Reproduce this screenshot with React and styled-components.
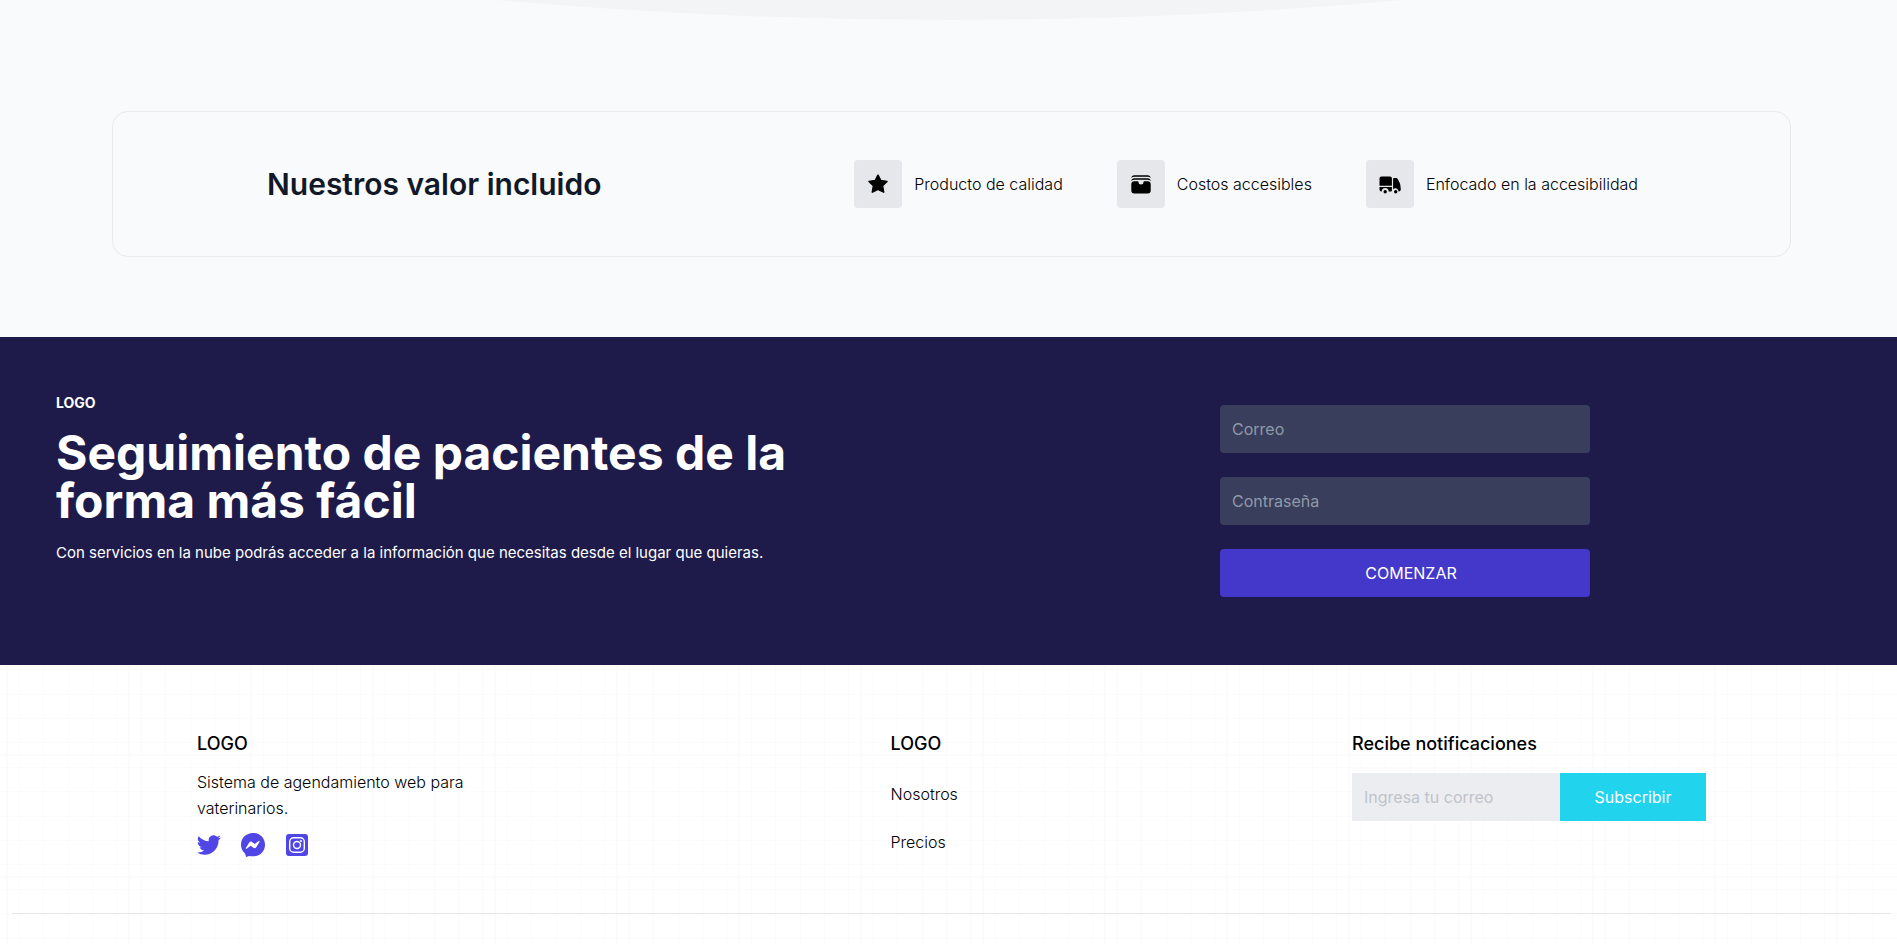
import React from "react";
import styled, { createGlobalStyle } from "styled-components";

const Global = createGlobalStyle`
  *, *::before, *::after { box-sizing: border-box; }
  body { margin: 0; background: #fff; color: #000; font: 300 16px/24px Inter, "Noto Sans", sans-serif; }
  h1, h2, h3, p, ul { margin: 0; padding: 0; }
  input, button { font: inherit; border: 0; margin: 0; min-width: 0; }
  svg { display: block; }
`;

const Values = styled.section`
  position: relative;
  overflow: hidden;
  background: #f9fafc;
  padding: 111px 106px 80px 112px;
`;

const Curve = styled.svg`
  position: absolute;
  top: 0;
  left: 50%;
  width: 906px;
  height: 20px;
  margin-left: -452px;
`;

const ValueCard = styled.div`
  display: flex;
  align-items: center;
  min-height: 146px;
  padding: 48px 152px 48px 154px;
  border: 1px solid #e9eaec;
  border-radius: 16px;
`;

const ValueTitle = styled.h2`
  flex: 1;
  color: #111827;
  font-size: 30px;
  line-height: 36px;
  font-weight: 600;
`;

const ValueList = styled.ul`
  display: flex;
  gap: 54px;
  list-style: none;
`;

const ValueItem = styled.li`
  display: flex;
  align-items: center;
  gap: 12px;
`;

const IconTile = styled.span`
  display: grid;
  place-items: center;
  width: 48px;
  height: 48px;
  border-radius: 4px;
  background: #e5e7eb;
`;

const Hero = styled.section`
  display: flex;
  background: #1e1b4b;
  color: #fff;
  padding: 56px;
  min-height: 328px;
`;

const Pitch = styled.div`
  width: 740px;
`;

const Brand = styled.p`
  font-size: 14px;
  line-height: 20px;
  font-weight: 700;
`;

const HeroTitle = styled.h1`
  margin: 16px 0;
  font-size: 48px;
  line-height: 48px;
  font-weight: 700;
`;

const HeroText = styled.p`
  font-size: 15px;
  font-weight: 400;
`;

const Access = styled.form`
  display: flex;
  flex-direction: column;
  gap: 24px;
  width: 370px;
  margin: 12px 251px 0 auto;
`;

const Field = styled.input`
  height: 48px;
  padding: 0 12px;
  border-radius: 4px;
  background: #383e5c;
  color: #fff;
  font-weight: 400;
  &::placeholder { color: #909aa7; opacity: 1; }
`;

const StartButton = styled.button`
  height: 48px;
  padding: 0 0 0 12px;
  border-radius: 4px;
  background: #4338ca;
  color: #fff;
  font-weight: 400;
`;

const line = "#fbfbfc";
const tile = (side) => `linear-gradient(to ${side},
  ${line} 0 2px, transparent 2px 13px, ${line} 13px 14px, transparent 14px 37px,
  ${line} 37px 38px, transparent 38px 62px, ${line} 62px 63px, transparent 63px 86px,
  ${line} 86px 87px, transparent 87px 110px, ${line} 110px 111px, transparent 111px)`;

const Footer = styled.footer`
  padding: 65px 6px 31px 12px;
  background-image: ${tile("right")}, ${tile("bottom")};
  background-size: 122px 122px;
  background-position: 6px 89px;
`;

const FooterColumns = styled.div`
  display: flex;
  justify-content: space-between;
  padding: 0 185px;
  min-height: 184px;
  border-bottom: 1px solid #e5e7eb;
`;

const Column = styled.div`
  width: ${(p) => p.$width}px;
`;

const ColumnTitle = styled.h3`
  margin-bottom: 15px;
  font-size: 18px;
  line-height: 28px;
  font-weight: 500;
`;

const About = styled.p`
  line-height: 26px;
  margin-top: -4px;
`;

const Social = styled.div`
  display: flex;
  gap: 20px;
  margin-top: 12px;
`;

const SocialLink = styled.a`
  color: #4f46e5;
`;

const LinkList = styled.ul`
  display: grid;
  gap: 24px;
  margin-top: 24px;
  list-style: none;
`;

const FooterLink = styled.a`
  color: inherit;
  text-decoration: none;
`;

const Newsletter = styled.form`
  display: flex;
`;

const MailInput = styled.input`
  flex: 1;
  height: 48px;
  padding: 0 12px;
  border-radius: 0;
  background: #ecedf1;
  font-weight: 400;
  &::placeholder { color: #bfc3ca; opacity: 1; }
`;

const Subscribe = styled.button`
  width: 146px;
  height: 48px;
  background: #22d3ee;
  color: #fff;
  font-weight: 400;
`;

const Star = () => (
  <svg width="24" height="24" viewBox="0 0 24 24" aria-hidden="true">
    <path d="M12 3.2 14.8 8.5 21 9.4 16.6 13.8 17.7 20.2 12 17.3 6.3 20.2 7.4 13.8 3 9.4 9.2 8.5Z" stroke="#000" strokeWidth="1.5" strokeLinejoin="round" />
  </svg>
);
const Wallet = () => (
  <svg width="24" height="24" viewBox="0 0 24 24" aria-hidden="true">
    <path d="M2.3 6C2.5 4.3 3.6 3.2 5.3 3.2h13.4c1.7 0 2.8 1.1 3 2.8-.8-.8-1.8-1.2-3-1.2H5.3c-1.2 0-2.2.4-3 1.2ZM2.3 9C2.5 7.3 3.6 6.3 5.3 6.3h13.4c1.7 0 2.8 1 3 2.7-.8-.8-1.8-1.2-3-1.2H5.3C4.1 7.8 3.1 8.2 2.3 9ZM5.3 9.3h3.4c.4 0 .8.3.8.7a2.5 2.5 0 0 0 5 0c0-.4.4-.7.8-.7h3.4a3 3 0 0 1 3 3v6.2a3 3 0 0 1-3 3H5.3a3 3 0 0 1-3-3v-6.2a3 3 0 0 1 3-3Z" />
  </svg>
);
const Truck = () => (
  <svg width="24" height="24" viewBox="0 0 24 24" aria-hidden="true">
    <path d="M3.400 4.500c-1 0-1.900.8-1.900 1.900v7.400h12.400V6.400c0-1.100-.8-1.900-1.900-1.900ZM13.900 15H1.500v2.600c0 1 .8 1.900 1.900 1.900H3.700a3.500 3.500 0 0 1 7 0h2.300c.5 0 .9-.4.900-.9ZM8.900 19.700a1.700 1.700 0 1 0-3.400 0 1.700 1.700 0 0 0 3.400 0ZM15.100 6.800c0-.4.300-.8.800-.8h1.700c1 0 1.800.5 2.300 1.300a17 17 0 0 1 2.900 9.800v.5c0 1-.8 1.900-1.900 1.900h-.3a3.200 3.200 0 0 0-5.500-2.300ZM19.400 19.700a1.700 1.700 0 1 0-3.400 0 1.700 1.700 0 0 0 3.400 0Z" />
  </svg>
);
const Twitter = () => (
  <svg width="24" height="24" viewBox="0 0 24 24" fill="currentColor" aria-hidden="true">
    <path d="M23.950 4.570a10 10 0 0 1-2.820.78 4.960 4.960 0 0 0 2.160-2.730c-.950.560-2 .960-3.130 1.180a4.920 4.920 0 0 0-8.380 4.480C7.690 8.100 4.070 6.130 1.640 3.160a4.920 4.920 0 0 0 1.520 6.570 4.900 4.900 0 0 1-2.230-.61v.060a4.920 4.920 0 0 0 3.950 4.830 5 5 0 0 1-2.210.080 4.940 4.940 0 0 0 4.600 3.420A9.870 9.870 0 0 1 0 19.540a14 14 0 0 0 7.550 2.210c9.050 0 14-7.500 14-13.980 0-.21 0-.42-.020-.63a9.900 9.900 0 0 0 2.420-2.570Z" />
  </svg>
);
const Messenger = () => (
  <svg width="24" height="24" viewBox="0 0 24 24" fill="currentColor" aria-hidden="true">
    <path fillRule="evenodd" d="M12 0C5.240 0 0 4.950 0 11.640c0 3.500 1.430 6.520 3.770 8.600.8.700 1.230 3.760 1.230 3.760l3.200-1.120c1.150.280 2.450.400 3.800.400 6.760 0 12-4.950 12-11.640S18.760 0 12 0ZM4.800 15.050l3.520-5.600c.56-.88 1.760-1.110 2.600-.48l2.800 2.100 4.020-3.040c.5-.38 1.180.220.840.760l-3.530 5.590c-.56.880-1.760 1.110-2.600.48l-2.800-2.100-4.020 3.050c-.5.380-1.170-.220-.83-.76Z" />
  </svg>
);
const Instagram = () => (
  <svg width="24" height="24" viewBox="0 0 24 24" aria-hidden="true">
    <rect x="1" y="1" width="22" height="22" rx="3" fill="currentColor" />
    <rect x="4.700" y="4.700" width="14.600" height="14.600" rx="4" fill="none" stroke="#fff" strokeWidth="1.400" />
    <circle cx="12" cy="12" r="3.500" fill="none" stroke="#fff" strokeWidth="1.400" />
    <circle cx="16" cy="8" r="1" fill="#fff" />
  </svg>
);

const values = [
  ["Producto de calidad", Star],
  ["Costos accesibles", Wallet],
  ["Enfocado en la accesibilidad", Truck],
];
const networks = [["Twitter", Twitter], ["Messenger", Messenger], ["Instagram", Instagram]];

export default function App() {
  return (
    <>
      <Global />
      <Values>
        <Curve viewBox="0 0 906 20" aria-hidden="true">
          <path d="M0 0Q453 40 906 0Z" fill="#f3f4f6" />
        </Curve>
        <ValueCard>
          <ValueTitle>Nuestros valor incluido</ValueTitle>
          <ValueList>
            {values.map(([label, Icon]) => (
              <ValueItem key={label}>
                <IconTile><Icon /></IconTile>
                {label}
              </ValueItem>
            ))}
          </ValueList>
        </ValueCard>
      </Values>
      <Hero>
        <Pitch>
          <Brand>LOGO</Brand>
          <HeroTitle>Seguimiento de pacientes de la forma más fácil</HeroTitle>
          <HeroText>Con servicios en la nube podrás acceder a la información que necesitas desde el lugar que quieras.</HeroText>
        </Pitch>
        <Access>
          <Field type="email" placeholder="Correo" aria-label="Correo" />
          <Field type="password" placeholder="Contraseña" aria-label="Contraseña" />
          <StartButton type="button">COMENZAR</StartButton>
        </Access>
      </Hero>
      <Footer>
        <FooterColumns>
          <Column $width={300}>
            <ColumnTitle>LOGO</ColumnTitle>
            <About>Sistema de agendamiento web para vaterinarios.</About>
            <Social>
              {networks.map(([name, Icon]) => (
                <SocialLink href="#" key={name} aria-label={name}><Icon /></SocialLink>
              ))}
            </Social>
          </Column>
          <Column $width={68}>
            <ColumnTitle>LOGO</ColumnTitle>
            <LinkList>
              <li><FooterLink href="#">Nosotros</FooterLink></li>
              <li><FooterLink href="#">Precios</FooterLink></li>
            </LinkList>
          </Column>
          <Column $width={354}>
            <ColumnTitle>Recibe notificaciones</ColumnTitle>
            <Newsletter>
              <MailInput type="email" placeholder="Ingresa tu correo" aria-label="Ingresa tu correo" />
              <Subscribe type="button">Subscribir</Subscribe>
            </Newsletter>
          </Column>
        </FooterColumns>
      </Footer>
    </>
  );
}
